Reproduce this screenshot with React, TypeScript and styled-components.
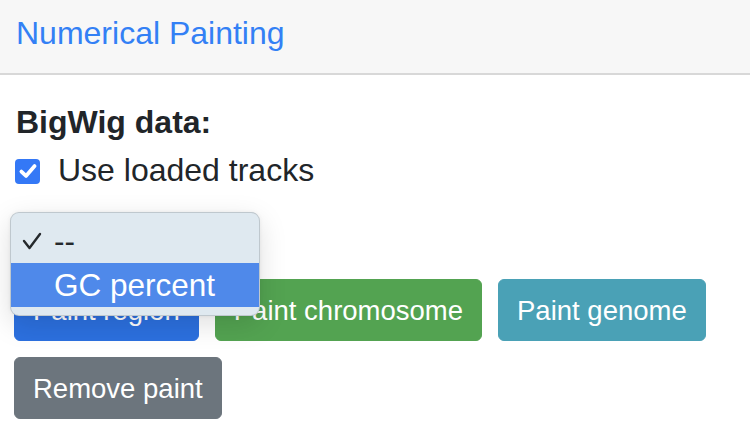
import React, { FC } from "react";
import styled, { createGlobalStyle } from "styled-components";

const GlobalStyle = createGlobalStyle`
  html, body {
    margin: 0;
    padding: 0;
    background: #ffffff;
    font-family: "Liberation Sans", Arial, Helvetica, sans-serif;
    color: #212529;
  }
`;

const Header = styled.div`
  box-sizing: border-box;
  height: 75px;
  padding: 17px 16px 0;
  background: #f7f7f7;
  border-bottom: 2px solid #d8d8d8;
`;

const Title = styled.div`
  font-size: 32px;
  line-height: 32px;
  color: #3380f5;
`;

const Body = styled.div`
  padding: 23px 16px 0;
`;

const Label = styled.div`
  font-size: 32px;
  line-height: 48px;
  font-weight: bold;
`;

const CheckRow = styled.label`
  display: flex;
  align-items: center;
  gap: 18px;
  font-size: 32px;
  line-height: 48px;
`;

const Box = styled.span`
  display: inline-flex;
  align-items: center;
  justify-content: center;
  width: 25px;
  height: 25px;
  margin-left: -1px;
  margin-top: 2px;
  border-radius: 4px;
  background: #3478f6;

  svg {
    fill: none;
    stroke: #ffffff;
    stroke-width: 3.4px;
    stroke-linecap: round;
    stroke-linejoin: round;
  }
`;

const SelectArea = styled.div`
  position: relative;
  height: 69px;
  margin-bottom: 16px;
`;

const Popup = styled.div`
  position: absolute;
  z-index: 2;
  left: -6px;
  top: 18px;
  width: 250px;
  box-sizing: border-box;
  padding: 6px 0 8px;
  background: #dfe9f0;
  border: 1px solid rgba(0, 0, 0, 0.14);
  border-radius: 9px;
  box-shadow: 0 8px 28px rgba(0, 0, 0, 0.13), 0 0 4px rgba(0, 0, 0, 0.06);
  overflow: hidden;
`;

const Option = styled.div<{ $active?: boolean }>`
  display: grid;
  grid-template-columns: 43px 1fr;
  align-items: center;
  height: 44px;
  font-size: 31.5px;
  color: ${({ $active }) => ($active ? "#ffffff" : "#25292c")};
  background: ${({ $active }) => ($active ? "#4f89ea" : "transparent")};

  svg {
    margin-left: 11px;
    fill: none;
    stroke: #25292c;
    stroke-width: 2.4px;
    stroke-linecap: round;
    stroke-linejoin: round;
  }
`;

const ButtonRow = styled.div`
  display: flex;
  flex-wrap: wrap;
  gap: 16px;
  margin-left: -2px;
  width: 720px;
`;

const tones = {
  primary: "#2c70df",
  success: "#53a351",
  info: "#4aa1b6",
  secondary: "#6c757d",
};

const Button = styled.button<{ $tone: keyof typeof tones }>`
  box-sizing: border-box;
  height: 62px;
  padding: 0 18px;
  font-family: inherit;
  font-size: 27.5px;
  line-height: 41px;
  color: #ffffff;
  background: ${({ $tone }) => tones[$tone]};
  border: 1px solid ${({ $tone }) => tones[$tone]};
  border-radius: 6px;
  cursor: pointer;
`;

const Check: FC<{ size: number }> = ({ size }) => (
  <svg width={size} height={size} viewBox="0 0 20 20">
    <polyline points="4 10.5 8.2 14.5 16 5.5" />
  </svg>
);

const App: FC = () => (
  <>
    <GlobalStyle />
    <Header>
      <Title>Numerical Painting</Title>
    </Header>
    <Body>
      <Label>BigWig data:</Label>
      <CheckRow>
        <Box>
          <Check size={22} />
        </Box>
        Use loaded tracks
      </CheckRow>
      <SelectArea>
        <Popup>
          <Option>
            <svg width="20" height="18" viewBox="0 0 20 18">
              <polyline points="2 9 7.5 16 18 2" />
            </svg>
            <span>--</span>
          </Option>
          <Option $active>
            <span />
            <span>GC percent</span>
          </Option>
        </Popup>
      </SelectArea>
      <ButtonRow>
        <Button $tone="primary">Paint region</Button>
        <Button $tone="success">Paint chromosome</Button>
        <Button $tone="info">Paint genome</Button>
        <Button $tone="secondary">Remove paint</Button>
      </ButtonRow>
    </Body>
  </>
);

export default App;
